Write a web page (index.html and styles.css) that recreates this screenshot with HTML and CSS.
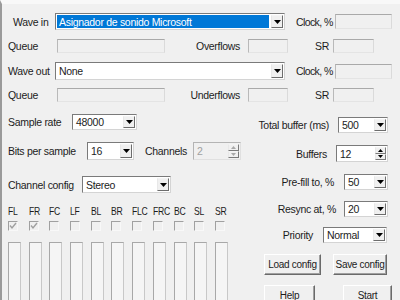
FILE: index.html
```html
<!DOCTYPE html>
<html lang="en">
<head>
    <meta charset="UTF-8">
    <title>Audio Repeater</title>
    <link rel="stylesheet" href="styles.css">
</head>
<body>
    <div class="dlg">
        <div class="row r-in">
            <span class="lbl lbl-wave in">Wave in</span>
            <div class="combo w-dev"><span class="val sel">Asignador de sonido Microsoft</span><span class="arrow"><svg width="7" height="4"><polygon points="0,0 7,0 3.5,4"/></svg></span></div>
            <span class="lbl lbl-clock">Clock, %</span>
            <div class="box w-clock"></div>
        </div>
        <div class="row r-q">
            <span class="lbl lbl-queue">Queue</span>
            <div class="box w-queue"></div>
            <span class="lbl lbl-flow">Overflows</span>
            <div class="box w-flow"></div>
            <span class="lbl lbl-sr">SR</span>
            <div class="box w-sr"></div>
        </div>
        <div class="row r-out">
            <span class="lbl lbl-wave">Wave out</span>
            <div class="combo w-dev"><span class="val">None</span><span class="arrow"><svg width="7" height="4"><polygon points="0,0 7,0 3.5,4"/></svg></span></div>
            <span class="lbl lbl-clock">Clock, %</span>
            <div class="box w-clock"></div>
        </div>
        <div class="row r-q2">
            <span class="lbl lbl-queue">Queue</span>
            <div class="box w-queue"></div>
            <span class="lbl lbl-flow">Underflows</span>
            <div class="box w-flow"></div>
            <span class="lbl lbl-sr">SR</span>
            <div class="box w-sr"></div>
        </div>

        <div class="bottom">
            <div class="left">
                <div class="row l1">
                    <span class="lbl" style="width:64px">Sample rate</span>
                    <div class="combo w-rate"><span class="val">48000</span><span class="arrow"><svg width="7" height="4"><polygon points="0,0 7,0 3.5,4"/></svg></span></div>
                </div>
                <div class="row l2">
                    <span class="lbl" style="width:79px">Bits per sample</span>
                    <div class="combo w-bits"><span class="val">16</span><span class="arrow"><svg width="7" height="4"><polygon points="0,0 7,0 3.5,4"/></svg></span></div>
                    <span class="lbl lbl-ch">Channels</span>
                    <div class="spin w-ch off"><span class="val">2</span><span class="spins"><span><svg width="5" height="3"><polygon points="2.5,0 5,3 0,3"/></svg></span><span><svg width="5" height="3"><polygon points="0,0 5,0 2.5,3"/></svg></span></span></div>
                </div>
                <div class="row l3">
                    <span class="lbl" style="width:74px">Channel config</span>
                    <div class="combo w-cfg"><span class="val">Stereo</span><span class="arrow"><svg width="7" height="4"><polygon points="0,0 7,0 3.5,4"/></svg></span></div>
                </div>
                <div class="chans">
                    <span class="ch">FL</span><span class="ch">FR</span><span class="ch">FC</span><span class="ch">LF</span><span class="ch">BL</span><span class="ch">BR</span><span class="ch">FLC</span><span class="ch">FRC</span><span class="ch">BC</span><span class="ch">SL</span><span class="ch">SR</span>
                </div>
                <div class="chans checks">
                    <span class="cb"><svg width="8" height="8"><polyline points="1,3.5 3,6 7,1" /></svg></span>
                    <span class="cb"><svg width="8" height="8"><polyline points="1,3.5 3,6 7,1" /></svg></span>
                    <span class="cb"></span><span class="cb"></span><span class="cb"></span><span class="cb"></span><span class="cb"></span><span class="cb"></span><span class="cb"></span><span class="cb"></span><span class="cb"></span>
                </div>
                <div class="chans meters">
                    <span class="meter"></span><span class="meter"></span><span class="meter"></span><span class="meter"></span><span class="meter"></span><span class="meter"></span><span class="meter"></span><span class="meter"></span><span class="meter"></span><span class="meter"></span><span class="meter"></span>
                </div>
            </div>

            <div class="right">
                <div class="row x1">
                    <span class="lbl">Total buffer (ms)</span>
                    <div class="combo w-tot"><span class="val">500</span><span class="arrow"><svg width="7" height="4"><polygon points="0,0 7,0 3.5,4"/></svg></span></div>
                </div>
                <div class="row x2">
                    <span class="lbl">Buffers</span>
                    <div class="spin w-buf"><span class="val">12</span><span class="spins"><span><svg width="5" height="3"><polygon points="2.5,0 5,3 0,3"/></svg></span><span><svg width="5" height="3"><polygon points="0,0 5,0 2.5,3"/></svg></span></span></div>
                </div>
                <div class="row x3">
                    <span class="lbl">Pre-fill to, %</span>
                    <div class="combo w-pct"><span class="val">50</span><span class="arrow"><svg width="7" height="4"><polygon points="0,0 7,0 3.5,4"/></svg></span></div>
                </div>
                <div class="row x4">
                    <span class="lbl">Resync at, %</span>
                    <div class="combo w-pct"><span class="val">20</span><span class="arrow"><svg width="7" height="4"><polygon points="0,0 7,0 3.5,4"/></svg></span></div>
                </div>
                <div class="row x5">
                    <span class="lbl">Priority</span>
                    <div class="combo w-prio"><span class="val">Normal</span><span class="arrow"><svg width="7" height="4"><polygon points="0,0 7,0 3.5,4"/></svg></span></div>
                </div>
                <div class="btns b1">
                    <button class="btn w-load">Load config</button>
                    <button class="btn w-save">Save config</button>
                </div>
                <div class="btns b2">
                    <button class="btn w-help">Help</button>
                    <button class="btn w-start">Start</button>
                </div>
            </div>
        </div>
    </div>
</body>
</html>
```

FILE: styles.css
```css
body {
    margin: 0;
    background-color: #f0f0f0;
    font-family: "Liberation Sans", Arial, sans-serif;
    font-size: 10.5px;
    letter-spacing: -0.3px;
    color: #1c1c1c;
}

.dlg {
    width: 392px;
    height: 296px;
    overflow: hidden;
    padding-left: 6px;
    border-left: 2px solid #9a9a9a;
    border-top: 4px solid #f8f8f8;
    background-color: #f0f0f0;
}

.row {
    display: flex;
    align-items: center;
}

.lbl {
    white-space: nowrap;
    flex-shrink: 0;
}

/* top part */
.r-in { margin-top: 9px; height: 17px; }
.r-q { margin-top: 9px; height: 14px; }
.r-out { margin-top: 9px; height: 18px; }
.r-q2 { margin-top: 8px; height: 14px; }

.lbl-wave { width: 47px; }
.lbl-wave.in { width: 42px; padding-left: 5px; }
.lbl-clock { margin-left: 11px; width: 38px; letter-spacing: -0.6px; }
.lbl-queue { width: 49px; }
.lbl-flow { width: 75px; text-align: right; }
.lbl-sr { width: 41px; text-align: right; }

.w-dev { width: 230px; height: 100%; }
.w-clock { width: 57px; height: 15px; margin-left: 1px; }
.w-queue { width: 108px; height: 14px; }
.w-flow { width: 40px; height: 14px; margin-left: 8px; }
.w-sr { width: 41px; height: 14px; margin-left: 4px; }

.box {
    box-sizing: border-box;
    border: 1px solid;
    border-color: #a9a9a9 #dadada #e4e4e4 #b9b9b9;
    background-color: #f0f0f0;
    flex-shrink: 0;
}

/* combo boxes */
.combo, .spin {
    box-sizing: border-box;
    display: flex;
    align-items: stretch;
    border: 1px solid;
    border-color: #7a7a7a #d4d4d4 #d4d4d4 #7a7a7a;
    background-color: #fff;
    flex-shrink: 0;
    padding: 1px;
}

.combo .val, .spin .val {
    flex: 1;
    display: flex;
    align-items: center;
    padding-left: 2px;
    overflow: hidden;
    white-space: nowrap;
}

.combo .val.sel {
    background-color: #0078d7;
    color: #fff;
    margin-right: 2px;
}

.arrow {
    width: 12px;
    box-sizing: border-box;
    border: 1px solid;
    border-color: #f4f4f4 #6d6d6d #6d6d6d #e8e8e8;
    background-color: #f0f0f0;
    display: flex;
    align-items: center;
    justify-content: center;
}

.arrow svg { fill: #000; }

.spins {
    width: 11px;
    display: flex;
    flex-direction: column;
}

.spins span {
    flex: 1;
    box-sizing: border-box;
    border: 1px solid;
    border-color: #f4f4f4 #7a7a7a #7a7a7a #e8e8e8;
    background-color: #f0f0f0;
    display: flex;
    align-items: center;
    justify-content: center;
}

.spins svg { fill: #000; }

.spin.off { background-color: #f0f0f0; border-color: #b4b4b4 #e0e0e0 #e0e0e0 #b4b4b4; }
.spin.off .val { color: #a0a0a0; }
.spin.off svg { fill: #a8a8a8; }

/* bottom part */
.bottom {
    display: flex;
    margin-top: 10px;
}

.left { width: 242px; }
.right { width: 142px; }

.l1 { margin-top: 2px; height: 16px; }
.l2 { margin-top: 12px; height: 18px; }
.l3 { margin-top: 16px; height: 17px; }

.w-rate { width: 65px; height: 100%; }
.w-bits { width: 47px; height: 100%; }
.lbl-ch { margin-left: 11px; width: 48px; }
.w-ch { width: 48px; height: 100%; }
.w-cfg { width: 89px; height: 100%; }

.chans {
    display: grid;
    grid-template-columns: repeat(11, 20.7px);
    margin-top: 12px;
    height: 12px;
    align-items: center;
}

.ch {
    display: inline-block;
    transform: scaleX(0.82);
    transform-origin: left center;
    white-space: nowrap;
}

.checks { margin-top: 4px; height: 10px; }

.cb {
    width: 10px;
    height: 10px;
    box-sizing: border-box;
    border: 1px solid;
    border-color: #a0a0a0 #f8f8f8 #f8f8f8 #a0a0a0;
    display: flex;
    align-items: center;
    justify-content: center;
}

.cb svg {
    fill: none;
    stroke: #a0a0a0;
    stroke-width: 1.4;
}

.meters { margin-top: 11px; height: 70px; align-items: stretch; }

.meter {
    width: 13px;
    box-sizing: border-box;
    border: 1px solid;
    border-color: #a8a8a8 #c8c8c8 #c8c8c8 #a8a8a8;
    background-color: #f5f5f5;
}

.right .row {
    justify-content: flex-end;
    padding-right: 4px;
}

.x1 { margin-top: 5px; height: 16px; }
.x2 { margin-top: 12px; height: 17px; }
.x3 { margin-top: 12px; height: 16px; }
.x4 { margin-top: 11px; height: 16px; }
.x5 { margin-top: 10px; height: 16px; }

.x1 .lbl { margin-right: 9px; }
.x2 .lbl { margin-right: 9px; }
.x3 .lbl { margin-right: 10px; }
.x4 .lbl { margin-right: 8px; }
.x5 .lbl { margin-right: 10px; }

.w-tot { width: 50px; height: 100%; }
.w-buf { width: 52px; height: 100%; }
.w-pct { width: 44px; height: 100%; }
.w-prio { width: 64px; height: 100%; margin-right: 1px; }

.btns {
    display: flex;
    padding-left: 14px;
    height: 21px;
}

.b1 { margin-top: 11px; gap: 12px; }
.b2 { margin-top: 10px; gap: 28px; }

.btn {
    box-sizing: border-box;
    height: 21px;
    padding: 0;
    border: 1px solid;
    border-color: #fff #6a6a6a #6a6a6a #fff;
    box-shadow: inset -1px -1px 0 #a0a0a0;
    background-color: #f0f0f0;
    font-family: inherit;
    font-size: 10px;
    letter-spacing: -0.3px;
    color: #1c1c1c;
}

.w-load { width: 57px; }
.w-save { width: 54px; }
.w-help { width: 51px; }
.w-start { width: 49px; }
```
